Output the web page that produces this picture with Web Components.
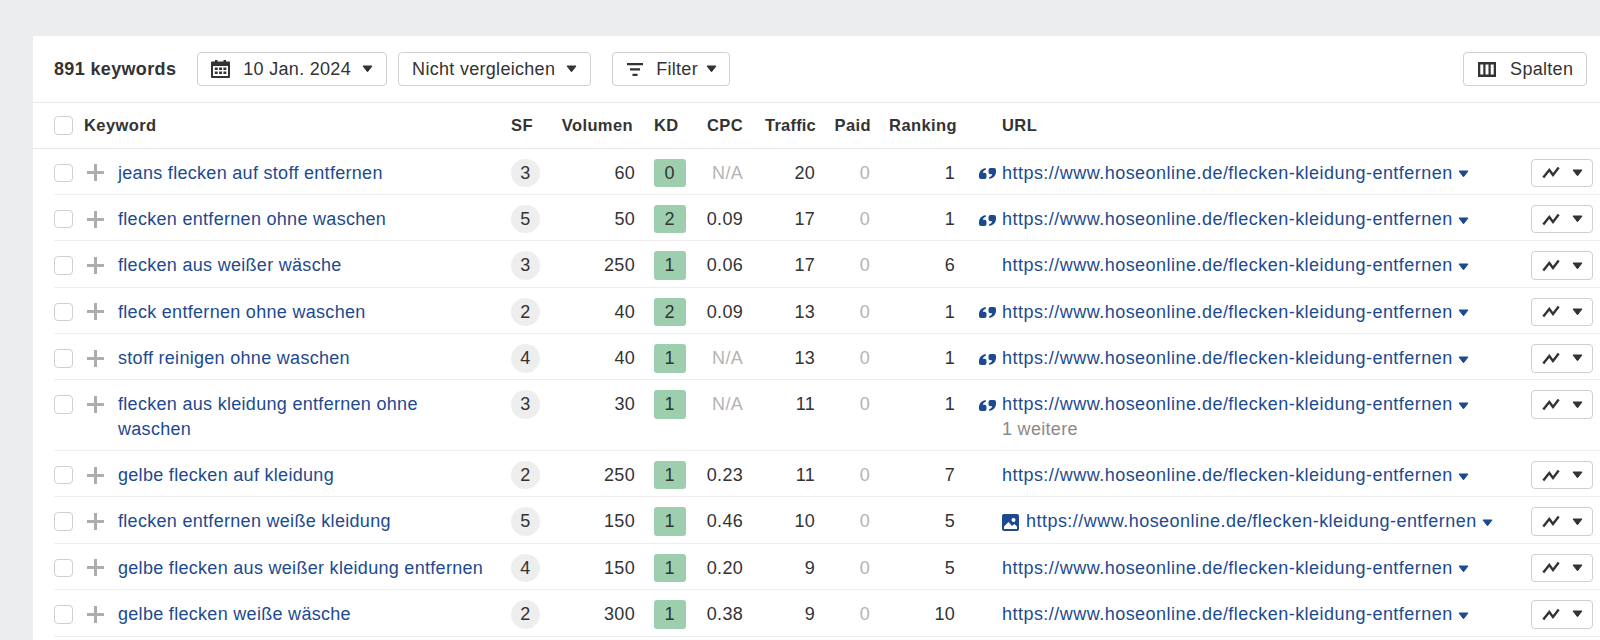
<!DOCTYPE html>
<html lang="de"><head><meta charset="utf-8"><title>Keywords</title>
<style>
html,body{margin:0;height:640px;overflow:hidden;background:#ebedef;font-family:"Liberation Sans",Arial,sans-serif;color:#333}
</style></head><body>
<kw-app></kw-app>
<script>
const caret=(c='#333',st='')=>`<svg width="11" height="8" viewBox="0 0 11 8" style="display:block;flex:none;${st}"><path d="M1 1h9L5.500 6.800z" fill="${c}" stroke="${c}" stroke-linejoin="round"/></svg>`;
const ICONS={
cal:`<svg width="19" height="18" viewBox="0 0 19 18" style="display:block"><path fill="#333" fill-rule="evenodd" d="M4 0h2.500v1.500h6V0H15v1.500h3a1 1 0 0 1 1 1V17a1 1 0 0 1-1 1H1a1 1 0 0 1-1-1V2.500a1 1 0 0 1 1-1h3zM2 6v10h15V6zm1.800 1.500h2.900v2.500H3.800zm4.300 0H11v2.500H8.100zm4.300 0h2.900v2.500h-2.900zm-8.600 4h2.900V14H3.800zm4.300 0H11V14H8.100zm4.300 0h2.900V14h-2.900z"/></svg>`,
filter:`<svg width="16" height="13" viewBox="0 0 16 13" style="display:block"><path fill="#333" d="M0 0h16v2.300H0zM3 5.300h10v2.300H3zM5.500 10.700h5V13h-5z"/></svg>`,
cols:`<svg width="18" height="15" viewBox="0 0 18 15" style="display:block"><path fill="#333" fill-rule="evenodd" d="M0 0h18v15H0zM2.300 2.500v10h3v-10zm5.200 0v10h3v-10zm5.200 0v10h3v-10z"/></svg>`,
trend:`<svg width="18" height="13" viewBox="0 0 17 13" style="display:block"><path fill="none" stroke="#333" stroke-width="2.400" d="M.8 11.500 6.800 4l3.700 5 5.700-7.500"/></svg>`,
quote:`<svg width="17" height="11" viewBox="0 0 17 11" style="display:block;margin-top:2px"><g fill="#1d4a8f"><path d="M0 7.500C0 3.500 2.500.8 6.500 0L7 1.800C5 2.500 4 3.500 3.800 4.800H5.500A2 2 0 0 1 7.500 6.800V9A2 2 0 0 1 5.500 11H2A2 2 0 0 1 0 9Z"/><path transform="rotate(180 8.500 5.500)" d="M0 7.500C0 3.500 2.500.8 6.500 0L7 1.800C5 2.500 4 3.500 3.800 4.800H5.500A2 2 0 0 1 7.500 6.800V9A2 2 0 0 1 5.500 11H2A2 2 0 0 1 0 9Z"/></g></svg>`,
image:`<svg width="17" height="17" viewBox="0 0 17 17" style="display:block;flex:none;margin-top:1px"><path fill="#1d4a8f" fill-rule="evenodd" d="M2 0h13a2 2 0 0 1 2 2v13a2 2 0 0 1-2 2H2a2 2 0 0 1-2-2V2a2 2 0 0 1 2-2zm9.500 4a2 2 0 1 0 0 4 2 2 0 0 0 0-4zM2 15h13v-2.500l-2.500-2.500-2.500 2-3.500-4L2 12.500z"/></svg>`
};
function def(name,css,html){customElements.define(name,class extends HTMLElement{
  connectedCallback(){if(this.shadowRoot)return;const s=this.attachShadow({mode:'open'});
    s.innerHTML=`<style>${css}</style>`+(typeof html==='function'?html(this):html);}
});}
def('kw-check',`:host{display:block;width:18.500px;height:18.500px;box-sizing:border-box;border:1.500px solid #cfcfcf;border-radius:4px;background:#fff}`,'');
def('kw-plus',`:host{display:block;width:17px;height:17px;position:relative}
i{position:absolute;background:#adadad}.h{left:0;right:0;top:7px;height:3px}.v{top:0;bottom:0;left:7px;width:3px}`,`<i class="h"></i><i class="v"></i>`);
def('kw-button',`:host{display:inline-flex;flex:none;box-sizing:border-box;height:33.500px;align-items:center;border:1.500px solid #cfcfcf;border-radius:4px;background:#fff;font-size:18px;letter-spacing:.3px;color:#333;white-space:nowrap;padding:0 0 0 var(--pl,14px)}
.ic{display:flex;margin-right:var(--ig,0)}
svg{flex:none}.cr{display:flex;margin-left:var(--cg,11px)}`,h=>`${h.getAttribute('icon')?`<span class="ic">${ICONS[h.getAttribute('icon')]}</span>`:''}<slot></slot>${h.hasAttribute('caret')?`<span class="cr">${caret()}</span>`:''}`);
def('kw-toolbar',`:host{display:flex;align-items:center;height:67px;box-sizing:border-box;padding:0 13px 0 21px;border-bottom:1.500px solid #e9e9e9}
b{font-size:18px;letter-spacing:.35px;font-weight:700;color:#333;margin-right:21px;flex:none}
.sp{flex:1}.a{margin-right:11px}.b{margin-right:21px}`,`<b>891 keywords</b>
<kw-button class="a" icon="cal" caret style="width:190px;--pl:12.500px;--ig:13.500px">10 Jan. 2024</kw-button>
<kw-button class="b" caret style="width:193px;--pl:12.800px">Nicht vergleichen</kw-button>
<kw-button icon="filter" caret style="width:118px;--pl:14.200px;--ig:12.700px;--cg:8.500px">Filter</kw-button>
<span class="sp"></span>
<kw-button icon="cols" style="width:124px;--pl:14.300px;--ig:13.800px">Spalten</kw-button>`);
const GRID=`33px 31px 393px 29px 95px 19px 31.500px 57.500px 72px 55px 85px 47px 529px 62px`;
def('kw-header',`:host{display:grid;grid-template-columns:${GRID};height:45.500px;box-sizing:border-box;align-items:center;padding-left:21px;border-bottom:1.500px solid #e9e9e9;font-size:16.500px;letter-spacing:.4px;font-weight:700;color:#333;white-space:nowrap}
.r{text-align:right}.k{grid-column:2/4;margin-left:-3px}.vol{padding-right:2px}.rank{margin-right:-2px}.sf{grid-column:4}.tr{letter-spacing:.2px;margin-right:-1px}.pd{margin-right:-1px}`,
`<kw-check></kw-check><span class="k">Keyword</span><span class="sf">SF</span><span class="r vol">Volumen</span><span></span><span>KD</span><span class="r">CPC</span><span class="r tr">Traffic</span><span class="r pd">Paid</span><span class="r rank">Ranking</span><span></span><span>URL</span>`);
def('kw-row',`:host{display:block;margin-left:21px;border-bottom:1.500px solid #eee;box-sizing:border-box;height:46.400px;padding-top:10px;font-size:18px;letter-spacing:.3px;line-height:24.500px;color:#333}
:host([tall]){height:70.500px}
.g{display:grid;grid-template-columns:${GRID};align-items:start}
.c{height:28.500px;display:flex;align-items:center;white-space:nowrap}
.r{justify-content:flex-end}
.kw{display:block;height:auto;white-space:normal;color:#1d4a8f;grid-column:3;padding-top:2px;padding-right:25px}
.sf{width:29px;border-radius:50%;background:#eee;justify-content:center}
.kd{border-radius:3px;justify-content:center}
.mut{color:#b4b4b4}
.q{justify-content:flex-end;padding-right:6px}
.u{display:block;height:auto}
.l{display:flex;align-items:center;height:28.500px;color:#1d4a8f;gap:5px;letter-spacing:.47px;white-space:nowrap}
.l .im{margin-right:2px;display:flex}
.more{color:#8a8a8a;line-height:20px}
.tb{box-sizing:border-box;width:62px;height:28.500px;border:1.500px solid #cfcfcf;border-radius:4px;display:flex;align-items:center;justify-content:center;gap:12px}`,h=>{
const a=n=>h.getAttribute(n)||'';
const cpc=a('cpc');
return `<div class="g"><div class="c"><kw-check></kw-check></div><div class="c"><kw-plus></kw-plus></div>
<div class="kw"><slot></slot></div>
<div class="c sf">${a('sf')}</div>
<div class="c r">${a('vol')}</div><div></div>
<div class="c kd" style="background:#9dcfae">${a('kd')}</div>
<div class="c r ${cpc==='N/A'?'mut':''}">${cpc}</div>
<div class="c r">${a('traffic')}</div>
<div class="c r mut">0</div>
<div class="c r">${a('rank')}</div>
<div class="c q">${a('icon')==='quote'?ICONS.quote:''}</div>
<div class="u"><div class="l">${a('icon')==='image'?`<span class="im">${ICONS.image}</span>`:''}<span>https://www.hoseonline.de/flecken-kleidung-entfernen</span>${caret('#1d4a8f','margin-top:3px')}</div>${h.hasAttribute('tall')?'<div class="more">1 weitere</div>':''}</div>
<div class="tb">${ICONS.trend}${caret()}</div></div>`});
const rows=[
['jeans flecken auf stoff entfernen',3,60,0,'N/A',20,1,'quote'],
['flecken entfernen ohne waschen',5,50,2,'0.09',17,1,'quote'],
['flecken aus weißer wäsche',3,250,1,'0.06',17,6,''],
['fleck entfernen ohne waschen',2,40,2,'0.09',13,1,'quote'],
['stoff reinigen ohne waschen',4,40,1,'N/A',13,1,'quote'],
['flecken aus kleidung entfernen ohne waschen',3,30,1,'N/A',11,1,'quote',1],
['gelbe flecken auf kleidung',2,250,1,'0.23',11,7,''],
['flecken entfernen weiße kleidung',5,150,1,'0.46',10,5,'image'],
['gelbe flecken aus weißer kleidung entfernen',4,150,1,'0.20',9,5,''],
['gelbe flecken weiße wäsche',2,300,1,'0.38',9,10,''],
];
def('kw-app',`:host{display:block;margin:36px 0 0 33px;background:#fff;height:604px;overflow:hidden}`,
`<kw-toolbar></kw-toolbar><kw-header></kw-header>`+rows.map(r=>`<kw-row sf="${r[1]}" vol="${r[2]}" kd="${r[3]}" cpc="${r[4]}" traffic="${r[5]}" rank="${r[6]}" icon="${r[7]}"${r[8]?' tall':''}>${r[0]}</kw-row>`).join(''));
</script></body></html>
